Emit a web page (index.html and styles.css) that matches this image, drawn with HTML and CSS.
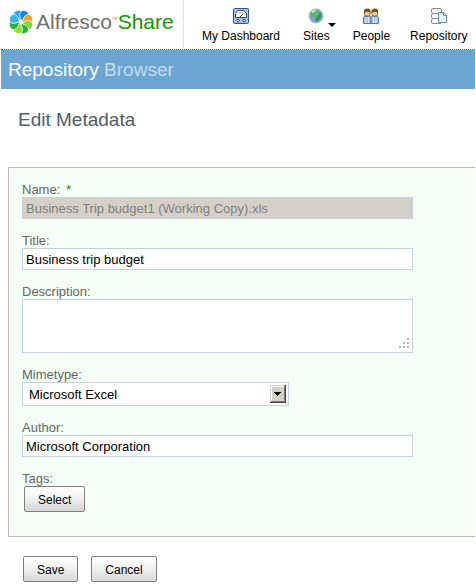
FILE: index.html
```html
<!DOCTYPE html>
<html lang="en">
<head>
    <meta charset="UTF-8">
    <meta name="viewport" content="width=device-width, initial-scale=1.0">
    <title>Edit Metadata</title>
    <link rel="stylesheet" href="styles.css">
</head>
<body>
    <header class="header">
        <a class="logo" href="#">
            <svg class="logo-mark" viewBox="-13 -13 26 26" aria-hidden="true">
                <defs>
                    <path id="petal" d="M0 -1.500C-3 -4 -4.800 -6 -4.500 -8.800C-4 -13.200 4 -13.200 4.500 -8.800C4.800 -6 3 -4 0 -1.500Z"/>
                </defs>
                <g stroke="#fff" stroke-width="0.7">
                    <use href="#petal" fill="#2f9df0" transform="rotate(-22)"/>
                    <use href="#petal" fill="#1686e4" transform="rotate(23)"/>
                    <use href="#petal" fill="#fba21c" transform="rotate(68)"/>
                    <use href="#petal" fill="#7fdc34" transform="rotate(113)"/>
                    <use href="#petal" fill="#2fb43c" transform="rotate(158)"/>
                    <use href="#petal" fill="#8ee02c" transform="rotate(203)"/>
                    <use href="#petal" fill="#2eae3a" transform="rotate(248)"/>
                    <use href="#petal" fill="#3fb4f2" transform="rotate(293)"/>
                </g>
                <circle r="2" fill="#fff"/>
            </svg>
            <span class="logo-name">Alfresco</span><span class="logo-tm">TM</span><span class="logo-share">Share</span>
        </a>
        <nav class="nav">
            <a href="#">
                <svg width="16" height="16" viewBox="0 0 16 16" aria-hidden="true">
                    <rect x="0.5" y="0.5" width="15" height="15" rx="1" fill="#a9c3e4" stroke="#2d5189"/>
                    <path d="M2.500 9.500V5.500L5 2.500H11L13.500 5.500V9.500Z" fill="#fff" stroke="#2d4a78"/>
                    <path d="M4 6.500L6 4.500H10L12 6.500" fill="none" stroke="#e0a868"/>
                    <path d="M7 9L10 6" stroke="#333"/>
                    <circle cx="5" cy="12.500" r="1.300" fill="#fff" stroke="#2d4a78"/>
                    <circle cx="11" cy="12.500" r="1.300" fill="#fff" stroke="#2d4a78"/>
                </svg>
                <span>My Dashboard</span>
            </a>
            <a class="has-menu" href="#">
                <svg width="16" height="16" viewBox="0 0 16 16" aria-hidden="true">
                    <circle cx="8" cy="8" r="7" fill="#7fa3cf" stroke="#a9b9d2"/>
                    <path d="M2 5L5 2.500L9 2L12 3L9 5L7 6L8 8L6 9L3 8Z" fill="#4fbb58"/>
                    <path d="M11 4L13 5L14 8L12 11L9 14L7 12L8 9L10 7Z" fill="#2f9e45"/>
                    <path d="M3 4L6 2L8 2.500L5 5Z" fill="#d5f0d2"/>
                </svg>
                <span>Sites</span>
            </a>
            <a href="#">
                <svg width="16" height="16" viewBox="0 0 16 16" aria-hidden="true">
                    <g id="person">
                        <path d="M0.500 15.500V10Q0.500 8 3 8H5.500Q8 8 8 10V15.500Z" fill="#a9c3e2" stroke="#5b7dae"/>
                        <path d="M3 9V15M5.500 9V15" stroke="#dce8f5"/>
                        <rect x="1.500" y="3" width="5.500" height="5" rx="1.500" fill="#f6cfa0" stroke="#8a5a24"/>
                        <path d="M1 5V2.500Q2 0.500 4.500 0.500Q7.500 0.500 7.500 3V4.500L4 3.500Z" fill="#7d4c17"/>
                    </g>
                    <use href="#person" x="7.500"/>
                </svg>
                <span>People</span>
            </a>
            <a href="#">
                <svg width="16" height="16" viewBox="0 0 16 16" aria-hidden="true">
                    <g fill="#f7f7f7" stroke="#8b8b8b">
                        <rect x="0.500" y="0.500" width="10" height="5" rx="1.500"/>
                        <rect x="0.500" y="5.500" width="10" height="5" rx="1.500"/>
                        <rect x="0.500" y="10.500" width="10" height="5" rx="1.500"/>
                    </g>
                    <path d="M7.500 4.500H12.500L15.500 7.500V14.500H7.500Z" fill="#eef5fd" stroke="#5f8fc4"/>
                    <path d="M12.500 4.500V7.500H15.500" fill="none" stroke="#5f8fc4"/>
                </svg>
                <span>Repository</span>
            </a>
        </nav>
    </header>

    <div class="page-title">Repository <span>Browser</span></div>

    <main>
        <h1>Edit Metadata</h1>
        <form>
            <div class="form-fields">
                <div class="field">
                    <label for="name">Name: <span class="required">*</span></label>
                    <input type="text" id="name" value="Business Trip budget1 (Working Copy).xls" disabled>
                </div>
                <div class="field">
                    <label for="title">Title:</label>
                    <input type="text" id="title" value="Business trip budget">
                </div>
                <div class="field">
                    <label for="description">Description:</label>
                    <div class="textarea-wrap">
                        <textarea id="description"></textarea>
                        <svg class="grip" width="10" height="10" viewBox="0 0 10 10" fill="#b8b8b8" aria-hidden="true">
                            <path d="M8 0h2v2h-2zM4 4h2v2h-2zM8 4h2v2h-2zM0 8h2v2h-2zM4 8h2v2h-2zM8 8h2v2h-2z"/>
                        </svg>
                    </div>
                </div>
                <div class="field">
                    <label for="mimetype">Mimetype:</label>
                    <div class="select-wrap">
                        <select id="mimetype">
                            <option>Microsoft Excel</option>
                        </select>
                        <svg class="arrow" width="16" height="18" viewBox="0 0 16 18" aria-hidden="true">
                            <rect width="16" height="18" fill="#404040"/>
                            <path d="M0 0H15V1H1V17H0Z" fill="#d4d0c8"/>
                            <rect x="1" y="1" width="14" height="16" fill="#808080"/>
                            <rect x="1" y="1" width="13" height="15" fill="#fff"/>
                            <rect x="2" y="2" width="12" height="14" fill="#d4d0c8"/>
                            <path d="M4 7h7v1h-1v1h-1v1h-1v1h-1v-1h-1v-1h-1v-1h-1z" fill="#000"/>
                        </svg>
                    </div>
                </div>
                <div class="field">
                    <label for="author">Author:</label>
                    <input type="text" id="author" value="Microsoft Corporation">
                </div>
                <div class="field">
                    <label for="tags">Tags:</label>
                    <button type="button" id="tags" class="select-tags">Select</button>
                </div>
            </div>
            <div class="form-buttons">
                <button type="submit">Save</button>
                <button type="button">Cancel</button>
            </div>
        </form>
    </main>
</body>
</html>
```

FILE: styles.css
```css
* {
    box-sizing: border-box;
}

body {
    margin: 0 1px;
    background: #fff;
    color: #000;
    font-family: "Liberation Sans", Arial, sans-serif;
    font-size: 13px;
}

.header {
    display: flex;
    height: 50px;
    border-bottom: 1px dotted #2c6b66;
}

.logo {
    display: flex;
    align-items: center;
    flex: none;
    width: 183px;
    height: 47px;
    padding: 0 0 4px 7px;
    border-right: 1px dotted #ccc;
    font-size: 21px;
    text-decoration: none;
}

.logo-mark {
    width: 26px;
    height: 26px;
    margin-right: 2px;
}

.logo-name {
    color: #707070;
}

.logo-tm {
    align-self: flex-start;
    margin-top: 16px;
    color: #888;
    font-size: 4px;
}

.logo-share {
    color: #0e960e;
}

.nav {
    display: flex;
    gap: 20px;
    padding: 8px 0 0 18px;
}

.nav a {
    position: relative;
    display: flex;
    flex-direction: column;
    align-items: center;
    gap: 4px;
    color: #000;
    font-size: 12px;
    line-height: 16px;
    text-decoration: none;
}

.nav .has-menu {
    padding: 0 3px;
}

.has-menu::after {
    content: "";
    position: absolute;
    top: 15px;
    right: -3px;
    border: 4px solid transparent;
    border-top-color: #000;
    border-bottom: 0;
}

.page-title {
    padding: 0 7px;
    background: #6ca5d1;
    color: #fff;
    font-size: 19px;
    line-height: 39px;
}

.page-title span {
    color: #c4dcf0;
}

h1 {
    margin: 0;
    padding: 19px 17px 36px;
    color: #515d6b;
    font-size: 19px;
    font-weight: normal;
    line-height: 23px;
}

.form-fields {
    display: flex;
    flex-direction: column;
    gap: 14px;
    margin-left: 7px;
    padding: 14px 13px 24px;
    background: #f5fff5;
    border: 1px solid #bbb;
    border-right: 0;
}

.field {
    max-width: 391px;
}

label {
    display: block;
    color: #666;
    line-height: 15px;
}

.required {
    margin-left: 2px;
    color: #0a8a0a;
}

input,
textarea,
select {
    display: block;
    width: 100%;
    height: 22px;
    margin: 0;
    padding: 0 3px;
    background: #fff;
    border: 1px solid #c2d3e0;
    border-radius: 0;
    color: #000;
    font: inherit;
}

input:disabled {
    background: #d4d0c8;
    color: #808080;
}

textarea {
    height: 54px;
    resize: none;
}

.textarea-wrap,
.select-wrap {
    position: relative;
}

.grip {
    position: absolute;
    right: 4px;
    bottom: 5px;
}

.select-wrap {
    max-width: 267px;
}

select {
    height: 24px;
    padding: 0 22px 0 6px;
    appearance: none;
}

.arrow {
    position: absolute;
    top: 3px;
    right: 3px;
    pointer-events: none;
}

button {
    height: 26px;
    padding: 2px 13px 0;
    background: linear-gradient(#fff, #f0f0f0 50%, #d6d6da);
    border: 1px solid #808080;
    border-radius: 2px;
    color: #000;
    font-family: inherit;
    font-size: 12px;
}

.select-tags {
    margin-left: 2px;
}

.form-buttons {
    display: flex;
    gap: 13px;
    padding: 19px 22px 6px;
}
```
